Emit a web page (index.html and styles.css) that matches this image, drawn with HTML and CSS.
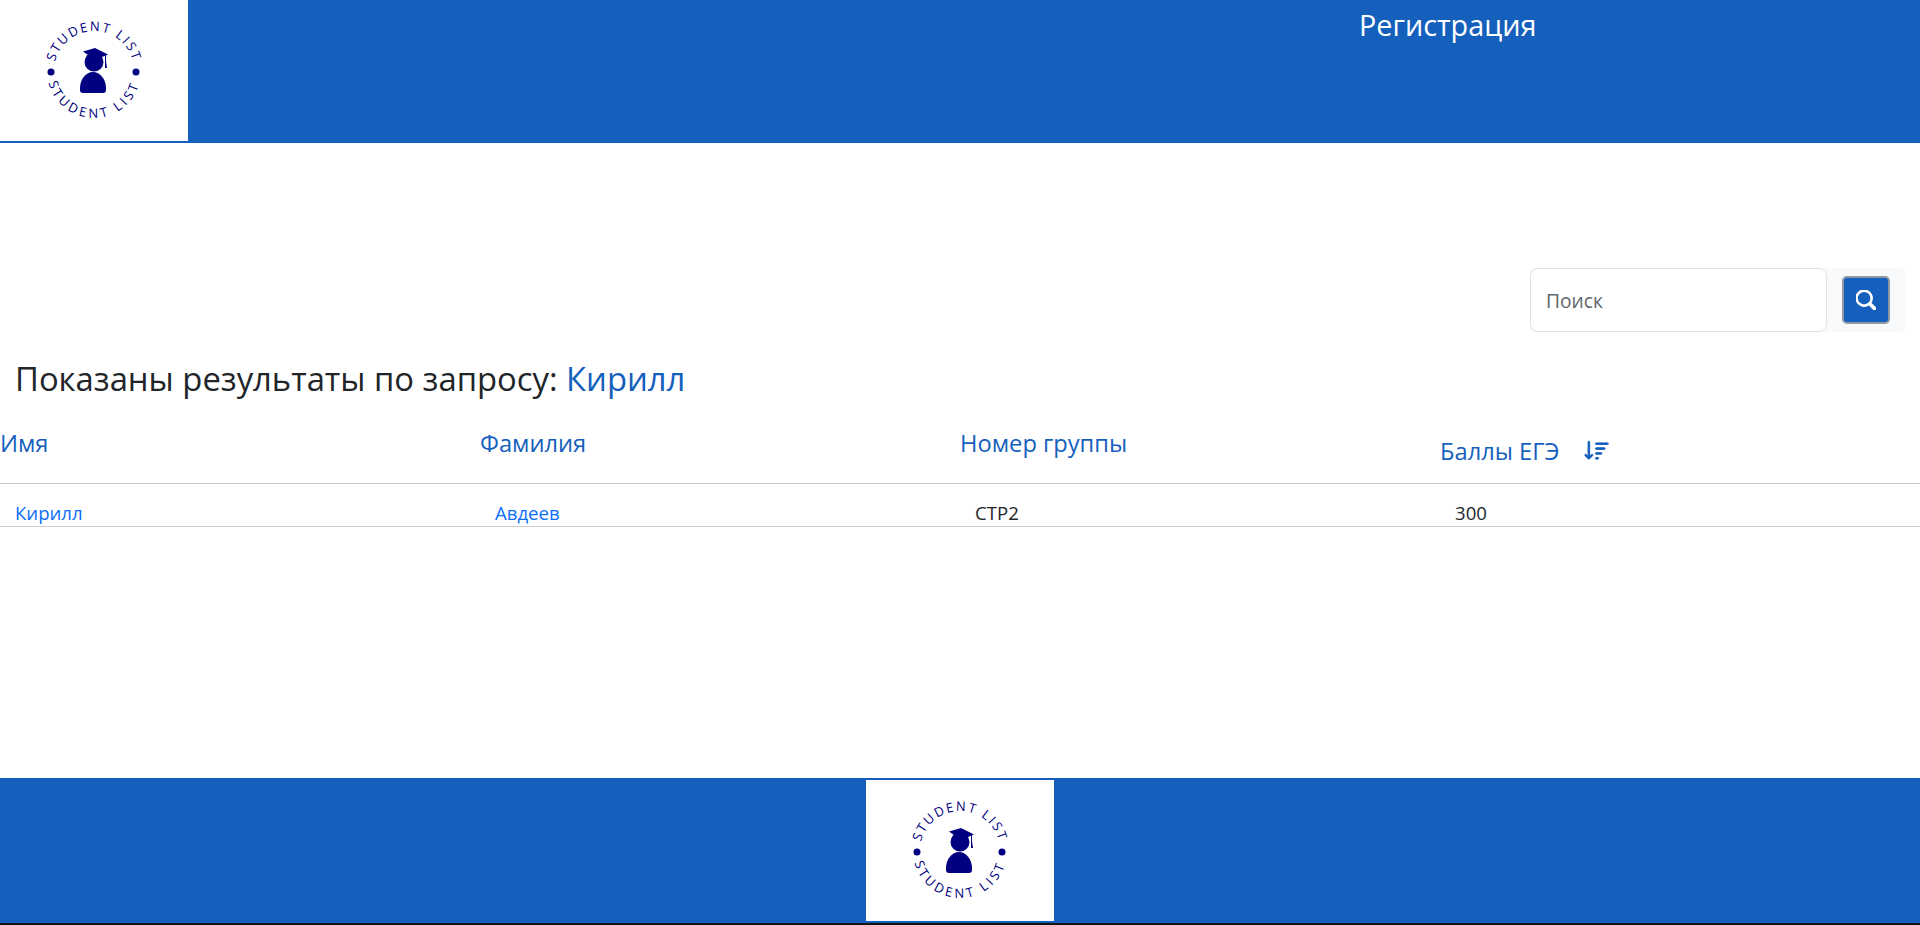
FILE: index.html
```html
<!DOCTYPE html>
<html lang="en">
<head>
    <meta charset="UTF-8">
    <meta name="viewport" content="width=device-width, initial-scale=1.0">
    <title>Student List</title>
    <link rel="stylesheet" href="styles.css">
</head>
<body>
    <header class="top-bar">
        <a class="logo-box" href="#">
            <svg class="logo" viewBox="0 0 188 141">
                <path id="arcTop" d="M 54 71 A 40 40 0 0 1 134 71" fill="none"/>
                <path id="arcBottom" d="M 47 71 A 47 47 0 0 0 141 71" fill="none"/>
                <text class="logo-text"><textPath href="#arcTop" startOffset="50%" text-anchor="middle">STUDENT LIST</textPath></text>
                <text class="logo-text logo-text-low"><textPath href="#arcBottom" startOffset="50%" text-anchor="middle">STUDENT LIST</textPath></text>
                <circle cx="51" cy="72" r="3.500"/>
                <circle cx="136" cy="72" r="3.500"/>
                <circle cx="94" cy="62" r="9.500"/>
                <path d="M 80 88 C 80 79 86 72 93 72 C 100 72 106 79 106 88 L 106 90 C 106 92 105 93 103 93 L 83 93 C 81 93 80 92 80 90 Z"/>
                <path d="M 83 51.500 L 95 48 L 108 54.500 L 95 60 Z"/>
                <path d="M 105 55 L 106 55 L 106 61 L 107 68 L 105 68 Z"/>
            </svg>
        </a>
        <a class="register-link" href="#">Регистрация</a>
    </header>

    <main class="content">
        <form class="search-row">
            <div class="search-form">
                <input class="search-input" type="text" placeholder="Поиск">
                <button class="search-btn" type="button">
                    <svg viewBox="0 0 16 16" width="20" height="20" fill="#fff"><path d="M11.742 10.344a6.5 6.5 0 1 0-1.397 1.398l3.85 3.85a1 1 0 0 0 1.415-1.414l-3.868-3.834zM12 6.500a5.500 5.500 0 1 1-11 0 5.500 5.500 0 0 1 11 0z" stroke="#fff" stroke-width="1"/></svg>
                </button>
            </div>
        </form>

        <h2 class="results-title">Показаны результаты по запросу: <span class="query">Кирилл</span></h2>

        <div class="students-head">
            <a class="th" href="#">Имя</a>
            <a class="th" href="#">Фамилия</a>
            <a class="th" href="#">Номер группы</a>
            <a class="th th-sort" href="#">Баллы ЕГЭ
                <svg class="sort-icon" viewBox="0 0 16 16" width="26" height="26" fill="#1560bd"><path d="M3.500 2.500a.5.5 0 0 0-1 0v8.793l-1.146-1.147a.5.5 0 0 0-.708.708l2 1.999.007.007a.497.497 0 0 0 .7-.006l2-2a.5.5 0 0 0-.707-.708L3.500 11.293V2.500zm3.500 1a.5.5 0 0 1 .5-.5h7a.5.5 0 0 1 0 1h-7a.5.5 0 0 1-.5-.5zM7.500 6a.5.5 0 0 0 0 1h5a.5.5 0 0 0 0-1h-5zm0 3a.5.5 0 0 0 0 1h3a.5.5 0 0 0 0-1h-3zm0 3a.5.5 0 0 0 0 1h1a.5.5 0 0 0 0-1h-1z" stroke="#1560bd" stroke-width=".6"/></svg>
            </a>
        </div>
        <div class="students-row">
            <a class="td" href="#">Кирилл</a>
            <a class="td" href="#">Авдеев</a>
            <span class="td">СТР2</span>
            <span class="td">300</span>
        </div>
    </main>

    <footer class="bottom-bar">
        <a class="logo-box" href="#">
            <svg class="logo" viewBox="0 0 188 141">
                <path id="arcTop2" d="M 54 71 A 40 40 0 0 1 134 71" fill="none"/>
                <path id="arcBottom2" d="M 47 71 A 47 47 0 0 0 141 71" fill="none"/>
                <text class="logo-text"><textPath href="#arcTop2" startOffset="50%" text-anchor="middle">STUDENT LIST</textPath></text>
                <text class="logo-text logo-text-low"><textPath href="#arcBottom2" startOffset="50%" text-anchor="middle">STUDENT LIST</textPath></text>
                <circle cx="51" cy="72" r="3.500"/>
                <circle cx="136" cy="72" r="3.500"/>
                <circle cx="94" cy="62" r="9.500"/>
                <path d="M 80 88 C 80 79 86 72 93 72 C 100 72 106 79 106 88 L 106 90 C 106 92 105 93 103 93 L 83 93 C 81 93 80 92 80 90 Z"/>
                <path d="M 83 51.500 L 95 48 L 108 54.500 L 95 60 Z"/>
                <path d="M 105 55 L 106 55 L 106 61 L 107 68 L 105 68 Z"/>
            </svg>
        </a>
    </footer>
</body>
</html>
```

FILE: styles.css
```css
* {
    box-sizing: border-box;
}
body {
    margin: 0;
    height: 925px;
    display: flex;
    flex-direction: column;
    overflow: hidden;
    font-family: 'Open Sans', 'Noto Sans', sans-serif;
    background: white;
    color: #212529;
}
a {
    text-decoration: none;
}
.logo-text {
    font-family: 'Open Sans', sans-serif;
    font-size: 13px;
    letter-spacing: 1.800px;
}
.logo-text-low {
    letter-spacing: 3.200px;
}
.top-bar {
    height: 143px;
    flex-shrink: 0;
    display: flex;
    align-items: flex-start;
    background: #1560bd;
}
.logo-box {
    display: block;
    width: 188px;
    height: 141px;
    background: white;
}
.logo {
    display: block;
    width: 188px;
    height: 141px;
    fill: #000080;
}
.register-link {
    margin-left: 1171px;
    margin-top: 5px;
    color: white;
    font-size: 28.800px;
    line-height: 40px;
}
.content {
    flex: 1;
}
.search-row {
    display: flex;
    justify-content: flex-end;
    padding: 125px 15px 0 0;
}
.search-form {
    display: flex;
    align-items: center;
    width: 375px;
    height: 64px;
    background: #f8f9fa;
    border-radius: 6px;
}
.search-input {
    width: 297px;
    height: 64px;
    padding: 0 15px;
    border: 1px solid #dee2e6;
    border-radius: 8px;
    font-family: inherit;
    font-size: 19.200px;
    color: #495057;
    background: white;
}
.search-input::placeholder {
    color: #5f666c;
}
.search-btn {
    width: 48px;
    height: 48px;
    margin-left: 15px;
    display: flex;
    align-items: center;
    justify-content: center;
    padding: 0;
    background: #1560bd;
    border: 2px solid #8f98a3;
    border-radius: 5px;
}
.results-title {
    margin: 23px 0 0;
    padding-left: 15px;
    font-size: 32.800px;
    font-weight: 400;
    line-height: 48px;
}
.query {
    color: #1560bd;
}
.students-head, .students-row {
    display: grid;
    grid-template-columns: repeat(4, 480px);
    border-bottom: 1px solid #ccc;
}
.students-head {
    height: 69px;
    padding-top: 12px;
    margin-top: 12px;
}
.students-row {
    height: 43px;
    padding-bottom: 1px;
    align-items: end;
}
.th {
    color: #1560bd;
    font-size: 23.700px;
    line-height: 32px;
}
.th-sort {
    display: flex;
    align-items: center;
    gap: 24px;
    margin-top: 8px;
    align-self: start;
}
.sort-icon {
    flex-shrink: 0;
}
.td {
    padding-left: 15px;
    font-size: 18.600px;
    line-height: 24px;
    color: #212529;
}
a.td {
    color: #0d6efd;
}
.bottom-bar {
    height: 147px;
    flex-shrink: 0;
    display: flex;
    justify-content: center;
    padding-top: 2px;
    background: #1560bd;
    border-bottom: 2px solid #111;
}
```
